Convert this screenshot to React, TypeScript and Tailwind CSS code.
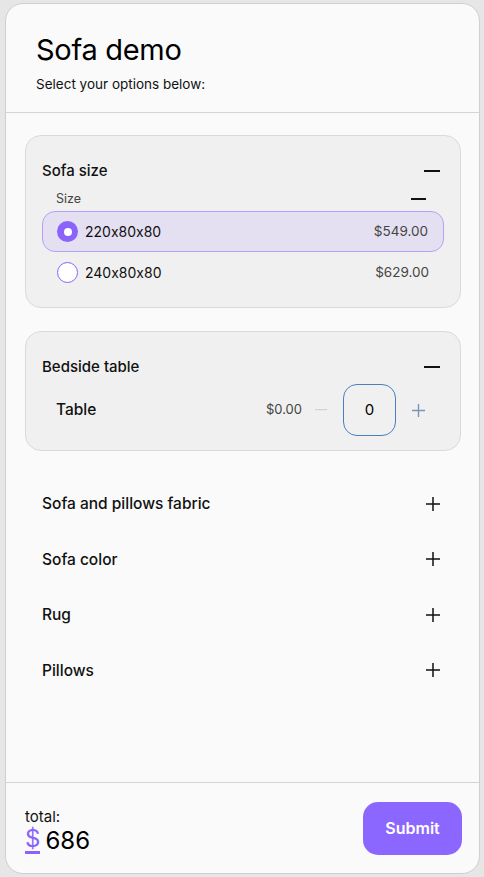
import React from "react";

const font = { fontFamily: "Inter, 'Liberation Sans', sans-serif" };

function Minus({ w = 16 }: { w?: number }) {
  return (
    <svg width={w} height="2" viewBox={`0 0 ${w} 2`}>
      <rect x="0" y="0" width={w} height="2" fill="#111" />
    </svg>
  );
}

function Plus({ color = "#111", size = 14 }: { color?: string; size?: number }) {
  return (
    <svg width={size} height={size} viewBox="0 0 14 14">
      <path d="M7 0V14M0 7H14" stroke={color} strokeWidth="1.5" />
    </svg>
  );
}

export default function App() {
  return (
    <div className="w-[484px] h-[877px] bg-[#e6e6e6] pt-[3px] pl-[5px] pr-[4px] pb-[3px] [font-feature-settings:'calt'_0]" style={font}>
      <div className="h-[871px] rounded-[18px] border border-[#cfcfcf] bg-[#fafafa] flex flex-col overflow-hidden">
        <div className="h-[109px] shrink-0 border-b border-[#d4d4d4] pl-[30px] pt-[26px]">
          <div className="text-[29px] leading-[40px] text-black tracking-[-0.3px]">Sofa demo</div>
          <div className="text-[13.5px] leading-[20px] mt-[4px] text-[#111]">Select your options below:</div>
        </div>
        <div className="flex-1 pl-[19px] pr-[18px] pt-[22px]">
          <div className="rounded-[16px] border border-[#dadada] bg-[#f0f0f0] pt-[23px] pb-[15px] pl-[16px] pr-[20px]">
            <div className="flex items-center justify-between h-[24px]">
              <span className="text-[15px] font-medium text-[#111]">Sofa size</span>
              <Minus />
            </div>
            <div className="flex items-center justify-between h-[20px] mt-[6px] pl-[14px] pr-[14px]">
              <span className="text-[12.5px] text-[#444]">Size</span>
              <Minus w={15} />
            </div>
            <div className="mt-[2px] -mr-[4px]">
              <div className="h-[41px] rounded-[13px] border border-[#b4a2f8] bg-[#e4e0f1] flex items-center justify-between pl-[14px] pr-[15px]">
                <div className="flex items-center gap-[7px]">
                  <span className="w-[21px] h-[21px] rounded-full bg-[#8a63fb] flex items-center justify-center">
                    <span className="w-[8px] h-[8px] rounded-full bg-white" />
                  </span>
                  <span className="text-[14px] text-[#111]">220x80x80</span>
                </div>
                <span className="text-[13.5px] text-[#444]">$549.00</span>
              </div>
              <div className="h-[40px] flex items-center justify-between pl-[15px] pr-[15px]">
                <div className="flex items-center gap-[7px]">
                  <span className="w-[21px] h-[21px] rounded-full border border-[#8a63fb] bg-white" />
                  <span className="text-[14px] text-[#111]">240x80x80</span>
                </div>
                <span className="text-[13.5px] text-[#444]">$629.00</span>
              </div>
            </div>
          </div>

          <div className="mt-[23px] rounded-[16px] border border-[#dadada] bg-[#f0f0f0] pt-[23px] pb-[14px] pl-[16px] pr-[20px]">
            <div className="flex items-center justify-between h-[24px]">
              <span className="text-[15px] font-medium text-[#111]">Bedside table</span>
              <Minus />
            </div>
            <div className="flex items-center justify-between mt-[5px] pl-[14px]">
              <span className="text-[15.5px] font-medium text-[#111]">Table</span>
              <div className="flex items-center">
                <span className="text-[13px] text-[#444]">$0.00</span>
                <svg className="ml-[13px]" width="12" height="2" viewBox="0 0 12 2">
                  <rect width="12" height="1.2" fill="#c8d3e0" />
                </svg>
                <div className="ml-[16px] w-[53px] h-[52px] rounded-[14px] border border-[#4a7fc0] flex items-center justify-center text-[15px] text-black">0</div>
                <span className="ml-[16px] mr-[15px] flex"><Plus color="#7a95b8" size={13} /></span>
              </div>
            </div>
          </div>

          <div className="mt-[25px] flex flex-col">
            {["Sofa and pillows fabric", "Sofa color", "Rug", "Pillows"].map((t) => (
              <div key={t} className="h-[55.5px] flex items-center justify-between pl-[17px] pr-[21px]">
                <span className="text-[15.5px] font-medium text-[#111]">{t}</span>
                <Plus />
              </div>
            ))}
          </div>
        </div>
        <div className="h-[91px] shrink-0 border-t border-[#d4d4d4] flex items-center justify-between pl-[19px] pr-[17px]">
          <div className="flex flex-col pt-[4px]">
            <span className="text-[15px] leading-[20px] text-[#111]">total:</span>
            <div className="flex items-end leading-[28px]">
              <span className="text-[24px] text-[#8a63fb] border-b-[3px] border-[#8a63fb] leading-[24px]">$</span>
              <span className="text-[24px] text-black ml-[5px] leading-[26px]">686</span>
            </div>
          </div>
          <button className="w-[99px] h-[53px] rounded-[15px] bg-[#8c67ff] text-white text-[16px] font-semibold">Submit</button>
        </div>
      </div>
    </div>
  );
}
